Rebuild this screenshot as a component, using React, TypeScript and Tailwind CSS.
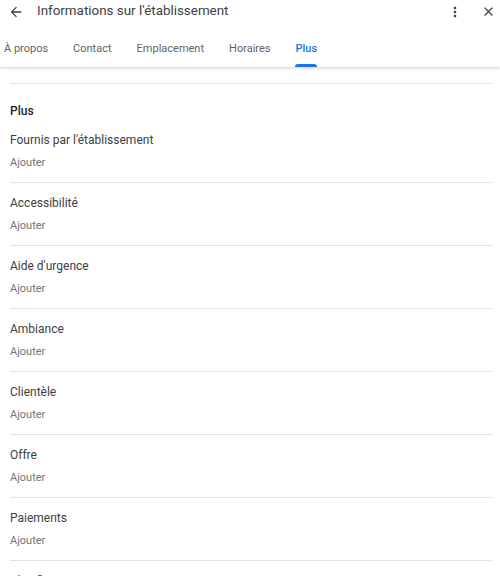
import React from "react";

const sections = [
  "Fournis par l'établissement",
  "Accessibilité",
  "Aide d'urgence",
  "Ambiance",
  "Clientèle",
  "Offre",
  "Paiements",
  "Planification",
];

const tabs = ["À propos", "Contact", "Emplacement", "Horaires", "Plus"];

const BackIcon = () => (
  <svg width="16" height="16" viewBox="0 0 24 24" fill="#3c4043">
    <path d="M20 11H7.83l5.59-5.59L12 4l-8 8 8 8 1.41-1.41L7.83 13H20v-2z" />
  </svg>
);

const MoreIcon = () => (
  <svg width="16" height="16" viewBox="0 0 24 24" fill="#3c4043">
    <path d="M12 8c1.1 0 2-.9 2-2s-.9-2-2-2-2 .9-2 2 .9 2 2 2zm0 2c-1.1 0-2 .9-2 2s.9 2 2 2 2-.9 2-2-.9-2-2-2zm0 6c-1.1 0-2 .9-2 2s.9 2 2 2 2-.9 2-2-.9-2-2-2z" />
  </svg>
);

const CloseIcon = () => (
  <svg width="15" height="15" viewBox="0 0 24 24" fill="#3c4043">
    <path d="M19 6.41L17.59 5 12 10.59 6.41 5 5 6.41 10.59 12 5 17.59 6.41 19 12 13.41 17.59 19 19 17.59 13.41 12z" />
  </svg>
);

const Section = ({ title }: { title: string }) => (
  <div className="border-t border-[#e3e3e3] pt-[10px] pb-[11px]">
    <p className="text-[12px] leading-[20px] text-[#3c4043]">{title}</p>
    <p className="mt-[5px] text-[11px] leading-[16px] text-[#70757a]">Ajouter</p>
  </div>
);

export default function App() {
  return (
    <div className="w-[500px] h-[576px] overflow-hidden bg-white font-['Roboto',sans-serif]">
      <header className="relative z-10 bg-white shadow-[0_1px_3px_rgba(60,64,67,0.25)]">
        <div className="flex h-[23px] items-center pl-[8px] pr-[4px]">
          <BackIcon />
          <h1 className="ml-[13px] text-[13.4px] text-[#3c4043]">
            Informations sur l'établissement
          </h1>
          <div className="ml-auto flex items-center gap-[18px]">
            <MoreIcon />
            <CloseIcon />
          </div>
        </div>
        <nav className="flex h-[44px] items-stretch gap-[25px] pl-[4px]">
          {tabs.map((t) => {
            const active = t === "Plus";
            return (
              <div
                key={t}
                className={`relative flex items-center pt-[8px] text-[11px] ${
                  active ? "font-medium text-[#1a73e8]" : "text-[#5f6368]"
                }`}
              >
                {t}
                {active && (
                  <span className="absolute bottom-0 left-0 right-0 h-[3px] rounded-t-[3px] bg-[#1a73e8]" />
                )}
              </div>
            );
          })}
        </nav>
      </header>

      <main className="ml-[10px] mr-[7px] pt-[16px]">
        <div className="border-t border-[#e3e3e3] pt-[17px]">
          <p className="text-[12px] leading-[20px] font-medium text-[#202124]">Plus</p>
        </div>
        <div className="pt-[9px] pb-[11px]">
          <p className="text-[12px] leading-[20px] text-[#3c4043]">{sections[0]}</p>
          <p className="mt-[5px] text-[11px] leading-[16px] text-[#70757a]">Ajouter</p>
        </div>
        {sections.slice(1).map((s) => (
          <Section key={s} title={s} />
        ))}
      </main>
    </div>
  );
}
